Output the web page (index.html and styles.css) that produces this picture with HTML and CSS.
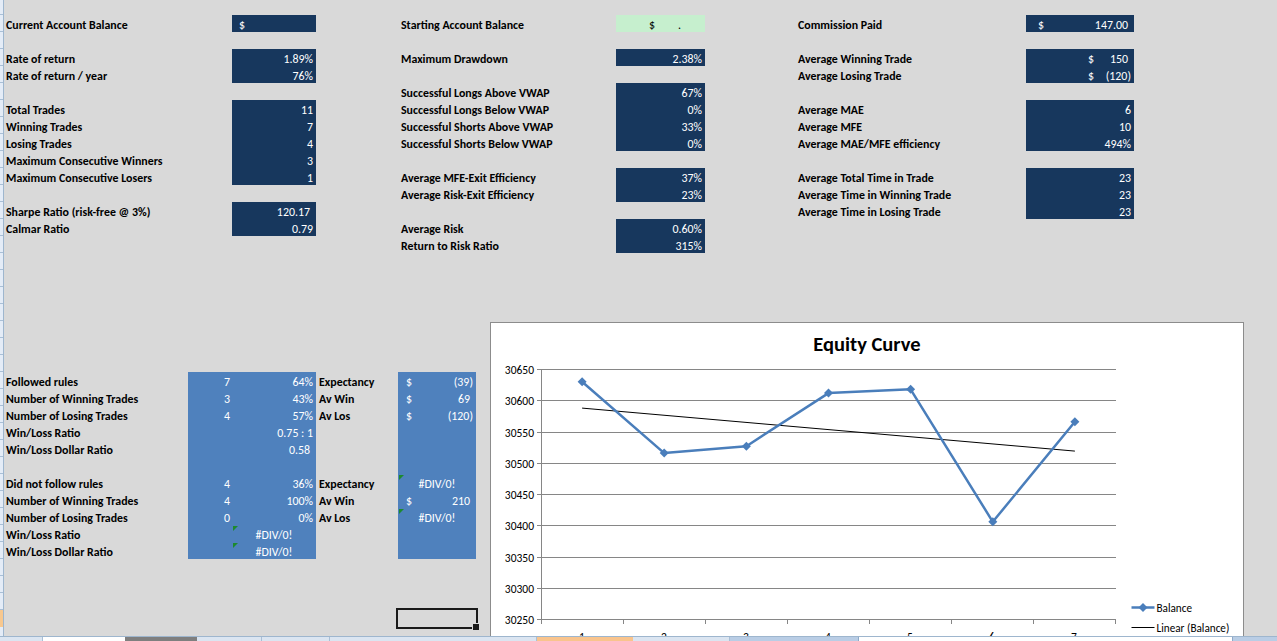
FILE: index.html
```html
<!DOCTYPE html>
<html lang="en">
<head>
<meta charset="utf-8">
<title>Trading Statistics</title>
<link rel="stylesheet" href="styles.css">
</head>
<body>
<div class="sheet">
  <div class="rowhdr"><div class="rowhdr-sel"></div></div>
  <div class="cells">
    <section class="stats">
      <div class="group g1">
        <div class="row"><span class="lbl">Current Account Balance</span><span class="val dark start"><span class="cur">$</span></span></div>
        <div class="row"></div>
        <div class="row"><span class="lbl">Rate of return</span><span class="val dark">1.89%</span></div>
        <div class="row"><span class="lbl">Rate of return / year</span><span class="val dark">76%</span></div>
        <div class="row"></div>
        <div class="row"><span class="lbl">Total Trades</span><span class="val dark">11</span></div>
        <div class="row"><span class="lbl">Winning Trades</span><span class="val dark">7</span></div>
        <div class="row"><span class="lbl">Losing Trades</span><span class="val dark">4</span></div>
        <div class="row"><span class="lbl">Maximum Consecutive Winners</span><span class="val dark">3</span></div>
        <div class="row"><span class="lbl">Maximum Consecutive Losers</span><span class="val dark">1</span></div>
        <div class="row"></div>
        <div class="row"><span class="lbl">Sharpe Ratio (risk-free @ 3%)</span><span class="val dark"><span class="pos">120.17</span></span></div>
        <div class="row"><span class="lbl">Calmar Ratio</span><span class="val dark">0.79</span></div>
      </div>
      <div class="group g2">
        <div class="row"><span class="lbl">Starting Account Balance</span><span class="val green start"><span class="cur-green">$</span><span class="dot">.</span></span></div>
        <div class="row"></div>
        <div class="row"><span class="lbl">Maximum Drawdown</span><span class="val dark">2.38%</span></div>
        <div class="row"></div>
        <div class="row"><span class="lbl">Successful Longs Above VWAP</span><span class="val dark">67%</span></div>
        <div class="row"><span class="lbl">Successful Longs Below VWAP</span><span class="val dark">0%</span></div>
        <div class="row"><span class="lbl">Successful Shorts Above VWAP</span><span class="val dark">33%</span></div>
        <div class="row"><span class="lbl">Successful Shorts Below VWAP</span><span class="val dark">0%</span></div>
        <div class="row"></div>
        <div class="row"><span class="lbl">Average MFE-Exit Efficiency</span><span class="val dark">37%</span></div>
        <div class="row"><span class="lbl">Average Risk-Exit Efficiency</span><span class="val dark">23%</span></div>
        <div class="row"></div>
        <div class="row"><span class="lbl">Average Risk</span><span class="val dark">0.60%</span></div>
        <div class="row"><span class="lbl">Return to Risk Ratio</span><span class="val dark">315%</span></div>
      </div>
      <div class="group g3">
        <div class="row"><span class="lbl">Commission Paid</span><span class="val dark acct"><span class="cur">$</span><span class="pos">147.00</span></span></div>
        <div class="row"></div>
        <div class="row"><span class="lbl">Average Winning Trade</span><span class="val dark"><span class="cur-in">$</span><span class="amt"><span class="pos">150</span></span></span></div>
        <div class="row"><span class="lbl">Average Losing Trade</span><span class="val dark"><span class="cur-in">$</span><span class="amt">(120)</span></span></div>
        <div class="row"></div>
        <div class="row"><span class="lbl">Average MAE</span><span class="val dark">6</span></div>
        <div class="row"><span class="lbl">Average MFE</span><span class="val dark">10</span></div>
        <div class="row"><span class="lbl">Average MAE/MFE efficiency</span><span class="val dark">494%</span></div>
        <div class="row"></div>
        <div class="row"><span class="lbl">Average Total Time in Trade</span><span class="val dark">23</span></div>
        <div class="row"><span class="lbl">Average Time in Winning Trade</span><span class="val dark">23</span></div>
        <div class="row"><span class="lbl">Average Time in Losing Trade</span><span class="val dark">23</span></div>
      </div>
    </section>

    <section class="rules">
      <span class="lbl">Followed rules</span><span class="b n">7</span><span class="b p">64%</span><span class="lbl2">Expectancy</span><span class="b acct"><span>$</span><span>(39)</span></span>
      <span class="lbl">Number of Winning Trades</span><span class="b n">3</span><span class="b p">43%</span><span class="lbl2">Av Win</span><span class="b acct"><span>$</span><span class="pos">69</span></span>
      <span class="lbl">Number of Losing Trades</span><span class="b n">4</span><span class="b p">57%</span><span class="lbl2">Av Los</span><span class="b acct"><span>$</span><span>(120)</span></span>
      <span class="lbl">Win/Loss Ratio</span><span class="b n"></span><span class="b p">0.75 : 1</span><span class="lbl2"></span><span class="b"></span>
      <span class="lbl">Win/Loss Dollar Ratio</span><span class="b n"></span><span class="b p"><span class="pos">0.58</span></span><span class="lbl2"></span><span class="b"></span>
      <span class="lbl"></span><span class="b n"></span><span class="b p"></span><span class="lbl2"></span><span class="b"></span>
      <span class="lbl">Did not follow rules</span><span class="b n">4</span><span class="b p">36%</span><span class="lbl2">Expectancy</span><span class="b err">#DIV/0!</span>
      <span class="lbl">Number of Winning Trades</span><span class="b n">4</span><span class="b p">100%</span><span class="lbl2">Av Win</span><span class="b acct"><span>$</span><span class="pos">210</span></span>
      <span class="lbl">Number of Losing Trades</span><span class="b n">0</span><span class="b p">0%</span><span class="lbl2">Av Los</span><span class="b err">#DIV/0!</span>
      <span class="lbl">Win/Loss Ratio</span><span class="b n"></span><span class="b err">#DIV/0!</span><span class="lbl2"></span><span class="b"></span>
      <span class="lbl">Win/Loss Dollar Ratio</span><span class="b n"></span><span class="b err">#DIV/0!</span><span class="lbl2"></span><span class="b"></span>
      <span class="sel"></span>
    </section>
  </div>
</div>

<div class="chart">
  <svg width="754" height="330" viewBox="0 0 754 330" xmlns="http://www.w3.org/2000/svg">
    <rect x="0.5" y="0.5" width="753" height="340" fill="#ffffff" stroke="#8c8c8c"/>
    <text x="377" y="29" class="ch-title" text-anchor="middle">Equity Curve</text>
    <g stroke="#868686" stroke-width="1" fill="none">
      <path d="M47 47.5H626M47 78.5H626M47 110.5H626M47 141.5H626M47 172.5H626M47 203.5H626M47 235.5H626M47 266.5H626M47 297.5H626"/>
      <path d="M51.5 47V298"/>
      <path d="M51.5 297V302M133.5 297V302M215.5 297V302M297.5 297V302M379.5 297V302M461.5 297V302M543.5 297V302M625.5 297V302"/>
    </g>
    <g class="ch-axis" text-anchor="end">
      <text x="44" y="51.5">30650</text>
      <text x="44" y="82.5">30600</text>
      <text x="44" y="114.5">30550</text>
      <text x="44" y="145.5">30500</text>
      <text x="44" y="176.5">30450</text>
      <text x="44" y="207.5">30400</text>
      <text x="44" y="239.5">30350</text>
      <text x="44" y="270.5">30300</text>
      <text x="44" y="301.5">30250</text>
    </g>
    <g class="ch-axis" text-anchor="middle">
      <text x="92" y="319">1</text>
      <text x="174" y="319">2</text>
      <text x="256" y="319">3</text>
      <text x="338" y="319">4</text>
      <text x="420" y="319">5</text>
      <text x="502" y="319">6</text>
      <text x="584" y="319">7</text>
    </g>
    <line x1="92.1" y1="86.1" x2="584.9" y2="129.1" stroke="#000" stroke-width="1"/>
    <polyline points="92.1,59.8 174.2,131.1 256.4,124.2 338.5,71.1 420.6,67.3 502.8,199.8 584.9,99.8" fill="none" stroke="#4a7ebb" stroke-width="2.5" stroke-linejoin="round"/>
    <g fill="#4a7ebb">
      <path d="M92.1 55.3l4.5 4.5-4.5 4.5-4.5-4.5z"/>
      <path d="M174.2 126.6l4.5 4.5-4.5 4.5-4.5-4.5z"/>
      <path d="M256.4 119.7l4.5 4.5-4.5 4.5-4.5-4.5z"/>
      <path d="M338.5 66.6l4.5 4.5-4.5 4.5-4.5-4.5z"/>
      <path d="M420.6 62.8l4.5 4.5-4.5 4.5-4.5-4.5z"/>
      <path d="M502.8 195.3l4.5 4.5-4.5 4.5-4.5-4.5z"/>
      <path d="M584.9 95.3l4.5 4.5-4.5 4.5-4.5-4.5z"/>
    </g>
    <line x1="641.5" y1="285.5" x2="664.5" y2="285.5" stroke="#4a7ebb" stroke-width="2.5"/>
    <path d="M653 281l4.5 4.5-4.5 4.5-4.5-4.5z" fill="#4a7ebb"/>
    <text x="666.5" y="289.5" class="ch-legend">Balance</text>
    <line x1="641.5" y1="305.5" x2="664.5" y2="305.5" stroke="#000" stroke-width="1"/>
    <text x="666.5" y="309.5" class="ch-legend">Linear (Balance)</text>
  </svg>
</div>

<div class="tabs">
  <span class="t t-lb" style="width:43px"></span>
  <span class="t t-w" style="width:82px"></span>
  <span class="t t-dk" style="width:72px"></span>
  <span class="t t-lb" style="width:65px"></span>
  <span class="t t-lb" style="width:68px"></span>
  <span class="t t-lb" style="width:207px"></span>
  <span class="t t-or" style="width:96px"></span>
  <span class="t t-lb" style="width:97px"></span>
  <span class="t t-md" style="width:128px"></span>
  <span class="t t-w t-box" style="width:375px"></span>
  <span class="t t-md" style="width:44px"></span>
</div>
</body>
</html>
```

FILE: styles.css
```css
* { box-sizing: border-box; }

html, body {
  margin: 0;
  padding: 0;
}

body {
  width: 1277px;
  height: 641px;
  overflow: hidden;
  position: relative;
  background: #d9d9d9;
  font-family: Carlito, Lato, "Liberation Sans", sans-serif;
  font-size: 11.9px;
  color: #000;
}

.sheet {
  display: flex;
  height: 641px;
}

/* row header sliver on the left */
.rowhdr {
  width: 4px;
  flex: none;
  border-right: 1px solid #9eb6ce;
  background: repeating-linear-gradient(to bottom, #e4ecf7 0 16px, #a9bfd6 16px 17px);
  background-position: 0 -2px;
}

.rowhdr-sel {
  margin-top: 610px;
  height: 17px;
  background: #f8c88f;
}

.cells {
  flex: 1;
  padding-top: 15px;
}

/* top statistics */
.stats {
  display: flex;
}

.group {
  display: flex;
  flex-direction: column;
}

.g2 { margin-left: 83px; }
.g3 { margin-left: 91px; }

.row {
  display: flex;
  height: 17px;
}

.lbl {
  font-weight: 700;
  white-space: nowrap;
  line-height: 17px;
  padding: 2px 0 0 2px;
}

.g1 .lbl { width: 228px; }
.g2 .lbl { width: 217px; }
.g3 .lbl { width: 230px; }
.g1 .val { width: 84px; }
.g2 .val { width: 89px; }
.g3 .val { width: 108px; }

.val {
  display: flex;
  justify-content: flex-end;
  color: #fff;
  line-height: 17px;
  padding: 2px 3px 0 3px;
  white-space: nowrap;
  overflow: hidden;
}

.dark { background: #17375d; }
.green { background: #c6efce; color: #000; }

.val.start { justify-content: flex-start; }
.val.acct { justify-content: space-between; padding-left: 8px; }

.cur { margin-left: 4px; }
.cur-green { margin-left: 30px; }
.dot { margin-left: 23px; }
.amt {
  width: 37px;
  text-align: right;
}

.pos { padding-right: 3px; }

/* bottom rules table */
.rules {
  display: grid;
  grid-template-columns: 184px 44px 84px 82px 78px;
  grid-template-rows: repeat(15, 17px);
  margin-top: 119px;
}

.rules > span {
  line-height: 17px;
  padding-top: 2px;
  white-space: nowrap;
  overflow: visible;
}

.lbl2 {
  font-weight: 700;
  padding-left: 3px;
}

.b {
  background: #4f81bd;
  color: #fff;
}

.b.n {
  text-align: right;
  padding-right: 2px;
}

.b.p {
  text-align: right;
  padding-right: 3px;
}

.b.acct {
  display: flex;
  justify-content: space-between;
  padding-left: 8px;
  padding-right: 3px;
}

.b.err {
  position: relative;
  text-align: center;
}

.b.err::before {
  content: "";
  position: absolute;
  left: 1px;
  top: 1px;
  width: 0;
  height: 0;
  border-top: 5px solid #1d8a2e;
  border-right: 5px solid transparent;
}

.sel {
  grid-row: 15;
  grid-column: 5;
  position: relative;
  outline: 2px solid #1a1a1a;
}

.sel::after {
  content: "";
  position: absolute;
  right: -4px;
  bottom: -4px;
  width: 6px;
  height: 6px;
  background: #1a1a1a;
  border: 1px solid #d9d9d9;
}

/* chart object floating over the sheet */
.chart {
  position: absolute;
  left: 490px;
  top: 322px;
  width: 754px;
  height: 330px;
}

.chart svg {
  display: block;
  font-family: Carlito, Lato, "Liberation Sans", sans-serif;
}

.ch-title {
  font-size: 20.5px;
  font-weight: 700;
  fill: #000;
}

.ch-axis text {
  font-size: 11.5px;
  fill: #000;
}

.ch-legend {
  font-size: 11.2px;
  fill: #000;
}

/* sheet tab strip at the bottom */
.tabs {
  position: absolute;
  left: 0;
  right: 0;
  bottom: 0;
  height: 5px;
  display: flex;
  border-top: 1px solid #9eb6ce;
  background: #dbe5f1;
}

.t {
  display: block;
  height: 100%;
  flex: none;
}

.t-lb { background: #dbe5f1; border-right: 1px solid #a9bfd6; }
.t-w { background: #ffffff; }
.t-dk { background: #7f7f7f; }
.t-or { background: #f9c48d; }
.t-md { background: #b9cde5; }
.t-box { border-left: 1px solid #8da9c9; border-right: 1px solid #8da9c9; }
```
